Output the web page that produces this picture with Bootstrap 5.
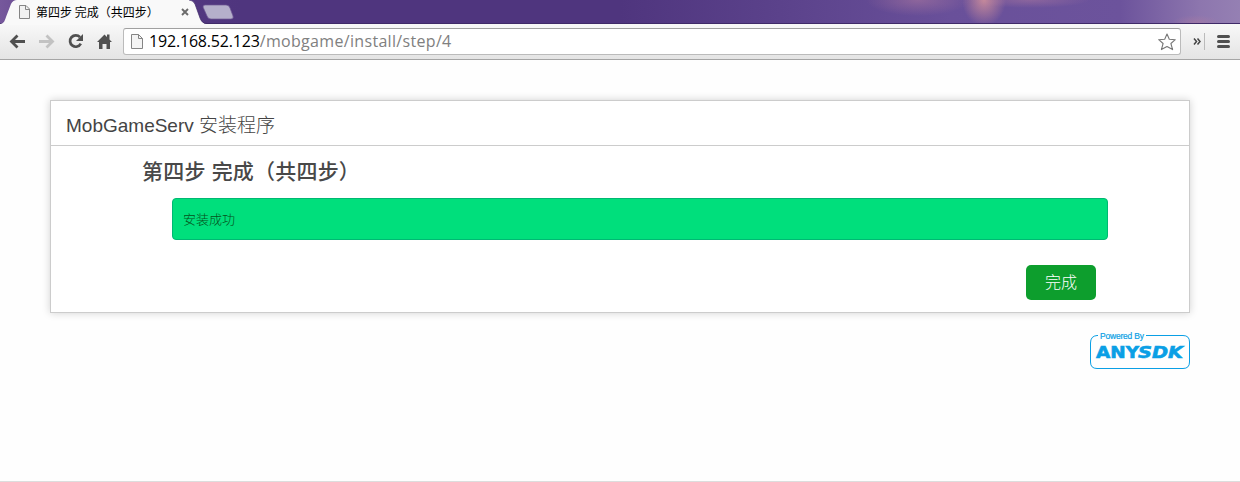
<!DOCTYPE html>
<html lang="zh-CN">
<head>
<meta charset="utf-8">
<meta name="viewport" content="width=device-width, initial-scale=1">
<title>第四步 完成（共四步）</title>
<link href="https://cdn.jsdelivr.net/npm/bootstrap@5.3.0/dist/css/bootstrap.min.css" rel="stylesheet">
<style>
body{background:#fefefe;color:#444;font-family:"Liberation Sans","Noto Sans CJK SC",sans-serif;height:482px;overflow:hidden;border-bottom:1px solid #ddd}
.tabstrip{height:24px;border-bottom:1px solid #3f2a68;background:
 radial-gradient(ellipse 22px 26px at 984px 0,rgba(205,142,155,.9),rgba(205,142,155,.5) 45%,transparent),
 radial-gradient(ellipse 52px 16px at 918px 0,rgba(180,125,160,.5),transparent),
 radial-gradient(ellipse 60px 8px at 1030px 0,rgba(180,125,160,.45),transparent),
 radial-gradient(ellipse 24px 8px at 1196px 23px,rgba(180,125,160,.45),transparent),
 linear-gradient(90deg,#76589c 0,#5a3d86 60px,#4f357e 240px,#4f357e 620px,#5b428b 780px,#69509a 950px,#6c539c 1120px,#8d76ae 1200px,#9580b3 1240px)}
.tab-art{left:0;top:0}
.tab-label{left:36px;top:4px;font:12px/16px "Noto Sans CJK SC",sans-serif;color:#000;white-space:nowrap}
.toolbar{height:36px;background:linear-gradient(#f8f8f8,#e4e4e4);border-bottom:1px solid #a5a5a5;padding:0 9px}
.nav-icons{width:114px}
.omnibox{width:1058px;height:27px;background:#fff;border:1px solid #bbb;border-top-color:#a0a0a0;border-radius:3px;padding:0 4px 0 7px}
.url{font:16px/24px "Open Sans","Noto Sans",sans-serif;color:#808080;margin-left:6px;padding-bottom:2px;letter-spacing:.32px}
.url-host{color:#000;letter-spacing:-.18px}
.panel{margin:40px 50px 0;height:213px;border:1px solid #ccc;background:#fff;box-shadow:0 0 8px rgba(0,0,0,.18)}
.panel-title{height:45px;border-bottom:1px solid #ccc;padding:7px 15px 0;font-size:19px;font-weight:300}
.step-title{font-size:21px;line-height:24px;font-weight:500;letter-spacing:.2px;margin:14px 0 0 91px;color:#484848}
.notice{height:42px;margin:14px 81px 0 121px;padding:1px 10px 0;background:#00df7c;border:1px solid #00b873;border-radius:4px;font-size:13px;font-weight:300;color:#06501a}
.done{width:70px;height:35px;margin:25px 93px 0 0;background:#0d9e2d;border-radius:5px;color:#fff;font-size:16px;font-weight:300;padding:0}
.brand-logo{margin:18px 50px 0 0}
</style>
</head>
<body>
<header>
<div class="tabstrip position-relative">
 <svg class="tab-art position-absolute" width="245" height="25" viewBox="0 0 245 25">
  <path d="M0 24C4 24 5 20 6 17L11 4Q13 0 17 0H189Q193 0 195 4L200 18Q202 24 207 24V25H0Z" fill="#f9f9f9"/>
  <path d="M189 0Q193 0 195 4L200 18Q202 23.500 207 23.500" fill="none" stroke="#3f2a68" stroke-opacity=".7"/>
  <path d="M205 5H226Q229 5 230 8L233 16Q234 19 231 19H211Q208 19 207 16L203 7Q203 5 205 5Z" fill="#b5afcb" stroke="#6e5894" stroke-width=".7"/>
  <path d="M19.500 5.500H26L29.500 9V18.500H19.500Z" fill="#f1f1f1" stroke="#858585"/><path d="M25.500 5.500V9.500H29.500" fill="none" stroke="#858585"/>
  <path d="M182 9L188 15M188 9L182 15" stroke="#6b6b6b" stroke-width="1.900"/>
 </svg>
 <span class="tab-label position-absolute">第四步 完成（共四步）</span>
</div>
<nav class="toolbar d-flex align-items-center">
 <div class="nav-icons flex-shrink-0">
 <svg class="d-block" width="108" height="20" viewBox="9 32 108 20" fill="none">
  <path d="M25 41.500H12M17.500 35.500L11.500 41.500L17.500 47.500" stroke="#505050" stroke-width="2.800"/>
  <path d="M39 41.500H52M46.500 35.500L52.500 41.500L46.500 47.500" stroke="#c2c2c2" stroke-width="2.800"/>
  <path d="M80 37.200A5.700 5.700 0 1 0 80.800 43.700" stroke="#505050" stroke-width="2.700"/><path d="M83 34V41H76Z" fill="#505050"/>
  <path d="M97 42L104.500 34.500L107 37V34.500H109.500V39.500L112 42H110V49H106.500V44H102.500V49H99V42Z" fill="#505050"/>
 </svg>
 </div>
 <div class="omnibox d-flex align-items-center flex-shrink-0">
  <svg class="flex-shrink-0" width="12" height="16" viewBox="0 0 12 16"><path d="M.5 .5H7.500L11.500 4.500V14.500H.5Z" fill="#f4f4f4" stroke="#858585"/><path d="M7.500 .5V4.500H11.500" fill="none" stroke="#858585"/></svg>
  <span class="url flex-grow-1"><span class="url-host">192.168.52.123</span>/mobgame/install/step/4</span>
  <svg width="18" height="18" viewBox="0 0 18 18"><path d="M9 1L11.300 6.300L17.300 6.700L12.900 10.500L14.600 16.600L9 13.500L3.400 16.600L5.100 10.500L.7 6.700L6.700 6.300Z" fill="#fff" stroke="#777" stroke-width="1.100" stroke-linejoin="round"/></svg>
 </div>
 <svg class="flex-shrink-0" width="50" height="24" viewBox="1181 30 50 24" fill="none"><path d="M1194 38.500L1196.500 41.500L1194 44.500M1197.500 38.500L1200 41.500L1197.500 44.500" stroke="#444" stroke-width="1.500"/><path d="M1204.500 33V50" stroke="#bbb"/><path d="M1218.500 36.500H1228.500M1218.500 41.500H1228.500M1218.500 46.500H1228.500" stroke="#505050" stroke-width="3" stroke-linecap="round"/></svg>
</nav>
</header>
<main>
 <section class="panel">
  <div class="panel-title d-flex align-items-center">MobGameServ 安装程序</div>
  <h1 class="step-title">第四步 完成（共四步）</h1>
  <div class="notice d-flex align-items-center">安装成功</div>
  <div class="d-flex justify-content-end"><button type="button" class="btn done">完成</button></div>
 </section>
 <footer class="d-flex justify-content-end">
  <svg class="brand-logo" width="100" height="40" viewBox="0 0 100 40">
   <path d="M8 4.500H7Q.5 5 .5 12V31Q.5 37.500 7 37.500H93Q99.500 37.500 99.500 31V11Q99.500 4.500 93 4.500H56" fill="none" stroke="#0a9fe5"/>
   <text x="10" y="8" textLength="44" font-family="Liberation Sans" font-size="8.500" fill="#0a9fe5" stroke="#0a9fe5" stroke-width=".2">Powered By</text>
   <g font-family="DejaVu Sans,sans-serif" font-weight="700" font-size="15.500" fill="#0a9fe5" stroke="#0a9fe5" stroke-width=".6"><text x="6" y="27" textLength="43" lengthAdjust="spacingAndGlyphs">ANY</text><text x="48" y="27" textLength="45" lengthAdjust="spacingAndGlyphs" font-style="italic">SDK</text></g>
  </svg>
 </footer>
</main>
<script src="https://cdn.jsdelivr.net/npm/bootstrap@5.3.0/dist/js/bootstrap.bundle.min.js"></script>
</body>
</html>
